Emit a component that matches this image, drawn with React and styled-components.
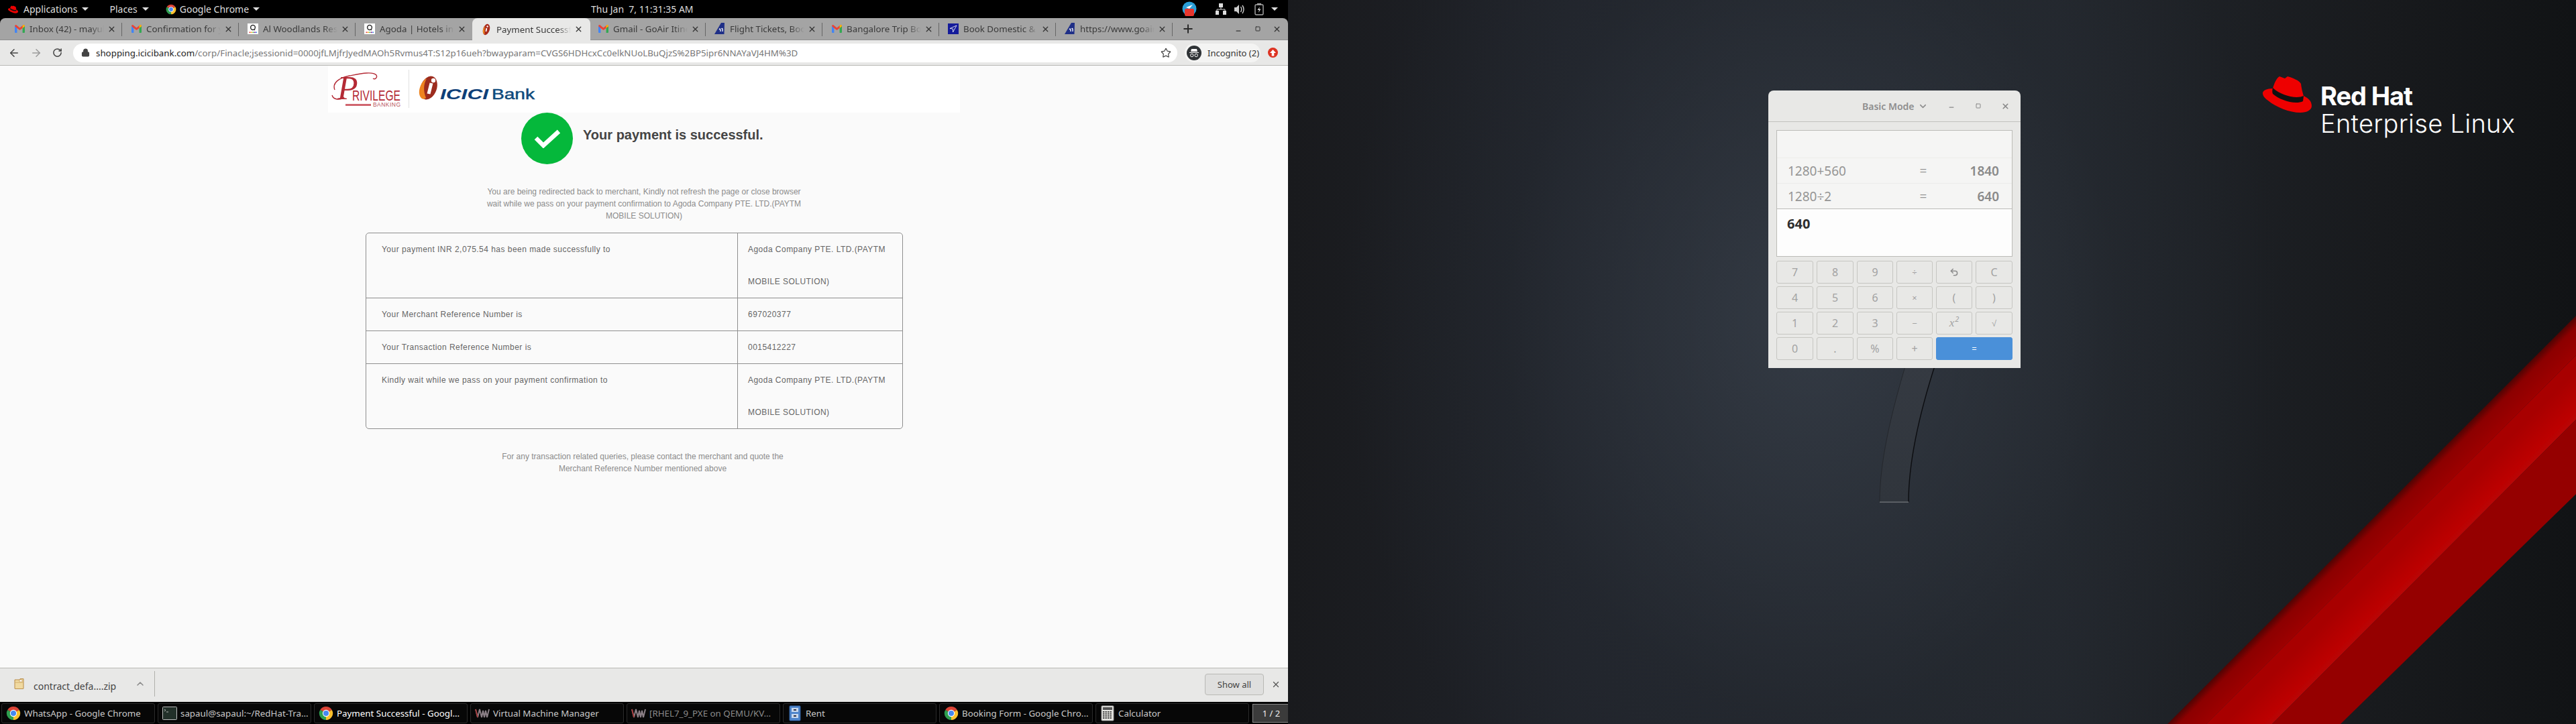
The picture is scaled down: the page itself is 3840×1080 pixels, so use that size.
import React from 'react';
import styled, { createGlobalStyle } from 'styled-components';
import { Undo2, ChevronDown, Star, Lock, ArrowLeft, ArrowRight, RotateCw, Plus, X, Minus, Square, ChevronUp } from 'lucide-react';

const Global = createGlobalStyle`
  html, body { margin: 0; padding: 0; background: #000; }
  * { box-sizing: border-box; }
  body { font-family: "Noto Sans", sans-serif; }
`;

const Root = styled.div`display: flex; width: 3840px; height: 1080px; overflow: hidden;`;
const Screen = styled.div`width: 1920px; height: 1080px; display: flex; flex-direction: column; flex: none;`;

/* top panel */
const TopBar = styled.div`height: 27px; background: #000; color: #dedede; font-size: 14px; display: flex; align-items: center; flex: none; position: relative;`;
const Menu = styled.div`display: flex; align-items: center; margin-left: ${p => p.$ml}px; gap: ${p => p.$gap || 0}px; white-space: nowrap;`;
const Caret = styled.span`width: 0; height: 0; margin-left: ${p => p.$ml ?? 7}px; border-left: 5px solid transparent; border-right: 5px solid transparent; border-top: 5px solid #dedede;`;
const Clock = styled.div`position: absolute; left: 881px; top: 0; line-height: 27px; white-space: pre;`;
const Tray = styled.div`margin-left: auto; display: flex; align-items: center; padding-right: 15px;`;
const TrayIcon = styled.svg`display: block; margin-left: ${p => p.$ml || 0}px;`;

/* tabs */
const TabStrip = styled.div`height: 33px; flex: none; background: #a4a4a4; display: flex; padding-left: 8px; border-top-left-radius: 8px; border-top-right-radius: 8px; border-bottom: 1px solid #8f8f8f; position: relative; align-items: stretch;`;
const TabItem = styled.div`
  width: ${p => (p.$active ? 176 : 174)}px; margin-right: ${p => (p.$active ? -2 : 0)}px; flex: none; position: relative; display: flex; align-items: center;
  padding-left: 13px; font-size: 13.33px; color: #3a3a3a; background: ${p => (p.$active ? '#e8e8e7' : 'transparent')};
  border-radius: 8px 8px 0 0; height: ${p => (p.$active ? 33 : 32)}px;
  z-index: ${p => (p.$active ? 1 : 0)};
  &::after { content: ''; display: ${p => (p.$sep ? 'block' : 'none')}; position: absolute; right: 0; top: 7px; width: 1px; height: 20px; background: #666; }
`;
const TabFav = styled.span`width: 16px; height: 18px; display: flex; align-items: center; justify-content: center; flex: none;`;
const TabTitle = styled.span`width: 111px; margin-left: 7px; white-space: nowrap; overflow: hidden; flex: none; -webkit-mask-image: linear-gradient(90deg, #000 82%, transparent); mask-image: linear-gradient(90deg, #000 82%, transparent);`;
const TabClose = styled.span`margin-left: 5px; display: flex; color: #333;`;
const NewTab = styled.div`margin-left: 13px; display: flex; align-items: center; color: #2a2a2a;`;
const WinCtrls = styled.div`margin-left: auto; display: flex; align-items: center; color: #333; font-size: 12px; gap: 0; padding-right: 2px;`;
const WinCtrl = styled.span`width: 29px; display: flex; justify-content: center; align-items: center;`;

/* toolbar */
const Toolbar = styled.div`height: 38px; flex: none; background: #e8e8e7; border-bottom: 1px solid #b9b9b5; display: flex; align-items: center; padding-left: 12px;`;
const NavBtn = styled.span`width: ${p => p.$w || 33}px; display: flex; color: ${p => (p.$off ? '#9a9a9a' : '#444')}; flex: none;`;
const Address = styled.div`margin-left: 0; width: 1646px; height: 28px; background: #fff; border-radius: 14px; display: flex; align-items: center; padding-left: 12px; font-size: 13.33px; white-space: nowrap; overflow: hidden; color: #777; flex: none;`;
const Host = styled.span`color: #222;`;
const Url = styled.span`margin-left: 9px; flex: 1; white-space: nowrap;`;
const StarWrap = styled.span`display: flex; padding-right: 9px; color: #444;`;
const Pill = styled.div`margin-left: 11px; width: 113px; height: 28px; background: #f4f4f3; border-radius: 14px; display: flex; align-items: center; padding-left: 2px; font-size: 13px; color: #333; white-space: nowrap; flex: none;`;
const Avatar = styled.span`width: 22px; height: 22px; border-radius: 50%; background: #2f3336; display: flex; align-items: center; justify-content: center; margin: 0 9px 0 1px; flex: none;`;
const Upgrade = styled.span`margin-left: 11px; width: 15px; height: 15px; border-radius: 50%; background: #dd3322; display: flex; align-items: center; justify-content: center; flex: none;`;

/* page */
const Page = styled.div`flex: 1; background: #fafafa; font-family: "Liberation Sans", Arial, sans-serif; display: flex; flex-direction: column; min-height: 0;`;
const LogoBar = styled.div`margin-left: 489px; width: 942px; height: 70px; background: #fff; flex: none;`;
const Hero = styled.div`margin-left: 777px; height: 77px; display: flex; flex: none;`;
const CheckCircle = styled.span`width: 77px; height: 77px; border-radius: 50%; background: #05b83b; display: flex; align-items: center; justify-content: center; flex: none;`;
const HeroTitle = styled.h1`margin: 22px 0 0 15px; font-size: 20px; line-height: 22px; font-weight: 700; color: #444; white-space: nowrap;`;
const Note = styled.p`margin: ${p => p.$mt}px 0 0 ${p => p.$ml}px; width: ${p => p.$w}px; text-align: center; font-size: 12px; line-height: 18px; color: #8c8c8c; flex: none;`;
const InfoTable = styled.div`margin: 16px 0 0 545px; width: 801px; border: 1px solid #8e8e8e; border-radius: 5px; font-size: 12px; line-height: 48px; color: #666; letter-spacing: 0.47px; flex: none;`;
const InfoRow = styled.div`display: flex; border-top: ${p => (p.$first ? 0 : 1)}px solid #8e8e8e;`;
const InfoLabel = styled.div`width: 554px; padding-left: 23px; border-right: 1px solid #8e8e8e; flex: none;`;
const InfoValue = styled.div`flex: 1; padding: 0 15px;`;

const DownloadBar = styled.div`height: 51px; flex: none; background: #e8e8e7; border-top: 1px solid #b9b9b5; display: flex; align-items: center; font-size: 14px; color: #444; position: relative;`;
const FileItem = styled.div`width: 231px; height: 38px; display: flex; align-items: center; padding-left: 21px; border-right: 1px solid #b0b0ac; flex: none; margin-top: -5px;`;
const FileName = styled.span`margin-left: 14px; white-space: nowrap; margin-top: 8px;`;
const FileChevron = styled.span`margin-left: 28px; display: flex; color: #888;`;
const ShowAll = styled.div`margin-left: auto; width: 88px; height: 32px; border: 1px solid #b9b9b5; border-radius: 4px; background: #dfdfde; display: flex; align-items: center; justify-content: center; font-size: 13px; color: #444; margin-top: -3px;`;
const BarClose = styled.span`margin: -3px 11px 0 11px; display: flex; color: #555;`;

const TaskBar = styled.div`height: 33px; flex: none; background: #000; display: flex; align-items: center; padding: 0 3px 0 2px; gap: 4px;`;
const TaskItem = styled.div`
  width: 229px; height: 30px; flex: none; display: flex; align-items: center; padding-left: 6px; border-radius: 3px;
  background: #070707; border: 1px solid #2b2b2b; font-size: 13.33px; white-space: nowrap; overflow: hidden; margin-top: 1px;
  color: ${p => (p.$active ? '#fff' : p.$dim ? '#8a8a8a' : '#c9c9c9')};
`;
const TaskIcon = styled.span`width: 22px; height: 22px; display: flex; align-items: center; justify-content: center; flex: none; margin-right: 5px;`;
const Pager = styled.div`width: 56px; height: 28px; margin-left: 1px; flex: none; background: #3b3b3b; border: 1px solid #8a8a8a; color: #eee; font-size: 13px; display: flex; align-items: center; justify-content: center;`;

/* desktop */
const Desktop = styled.div`
  width: 1920px; height: 1080px; flex: none; position: relative; overflow: hidden;
  background:
    radial-gradient(ellipse 700px 900px at 780px 480px, rgba(58,66,77,.75), rgba(40,46,54,.35) 65%, rgba(0,0,0,0) 100%),
    linear-gradient(90deg, #191a1d 0, #20232a 22%, #22262c 60%, #181a1d 85%, #111315 100%);
`;
const Wallpaper = styled.svg`position: absolute; inset: 0; display: block;`;
const Brand = styled.div`position: absolute; left: 1453px; top: 113px; display: flex; color: #fff;`;
const BrandText = styled.div`margin-left: 13px; display: flex; flex-direction: column; font-family: "Inter", "Open Sans", sans-serif; white-space: nowrap;`;
const BrandTop = styled.span`font-size: 38px; line-height: 41px; margin-top: 10px; font-weight: 700; letter-spacing: -1.1px;`;
const BrandBottom = styled.span`font-size: 38px; line-height: 41px; font-weight: 300; letter-spacing: 0.3px;`;

const CalcWindow = styled.div`position: absolute; left: 716px; top: 135px; width: 376px; height: 414px; background: #e8e8e6; border-radius: 8px 8px 0 0; display: flex; flex-direction: column; color: #8c8c8c; font-family: "Noto Sans", sans-serif;`;
const CalcHeader = styled.div`height: 47px; flex: none; border-bottom: 1px solid #c2c2be; display: flex; align-items: center; position: relative; padding-left: 140px; font-size: 14px; font-weight: 600; color: #8e8e8e;`;
const CalcTitle = styled.span`white-space: nowrap;`;
const CalcChevron = styled.span`margin-left: 5px; display: flex;`;
const CalcControls = styled.div`margin-left: auto; display: flex; padding-right: 3px;`;
const CalcCtrl = styled.span`width: 40px; display: flex; justify-content: center; align-items: center; color: #888;`;
const CalcDisplay = styled.div`margin: 12px 12px 0; height: 189px; border: 1px solid #bcbcb8; display: flex; flex-direction: column; flex: none;`;
const CalcSpacer = styled.div`height: 41px; background: #f5f5f4; border-bottom: 1px solid #ececea; flex: none;`;
const CalcRow = styled.div`height: 38px; background: #f5f5f4; border-bottom: 1px solid ${p => (p.$last ? '#bcbcb8' : '#ececea')}; display: flex; align-items: center; font-size: 19px; padding: 0 19px 0 16px; flex: none; color: #959595;`;
const CalcExpr = styled.span`width: 192px;`;
const CalcEq = styled.span`width: 20px; text-align: center;`;
const CalcResult = styled.span`flex: 1; text-align: right; font-weight: 600; color: #8a8a8a;`;
const CalcInput = styled.div`flex: 1; background: #fdfdfd; padding: 8px 15px; font-size: 20px; line-height: 28px; font-weight: 700; color: #2e2e2e;`;
const KeyGrid = styled.div`margin: 6px 12px 0; display: grid; grid-template-columns: 55px 55px 54px 54px 54px 55px; grid-auto-rows: 34px; gap: 4px 5px;`;
const Key = styled.div`
  border: 1px solid ${p => (p.$blue ? '#4a90d9' : '#c6c6c2')}; border-radius: 3px; background: ${p => (p.$blue ? '#4a90d9' : '#e8e8e6')};
  color: ${p => (p.$blue ? '#fff' : '#a2a2a2')}; font-size: ${p => p.$size || 16}px; display: flex; align-items: center; justify-content: center;
  grid-column: span ${p => p.$span || 1};
`;
const Italic = styled.span`font-style: italic; font-family: "Liberation Serif", serif; font-size: 17px;`;
const Sup = styled.sup`font-size: 11px; line-height: 0; margin-left: 1px; font-family: "Noto Sans", sans-serif;`;

/* drawings */
const Chrome = ({ s = 22 }) => (
  <svg width={s} height={s} viewBox="0 0 24 24">
    <path d="M12 12 L2.47 6.5 A11 11 0 0 1 21.53 6.5 Z" fill="#db4437" />
    <path d="M12 12 L21.53 6.5 A11 11 0 0 1 12 23 Z" fill="#fbc02d" />
    <path d="M12 12 L12 23 A11 11 0 0 1 2.47 6.5 Z" fill="#2e9e4f" />
    <circle cx="12" cy="12" r="5.6" fill="#fff" /><circle cx="12" cy="12" r="4.4" fill="#4688f1" />
  </svg>
);
const Gmail = () => (
  <svg width="15" height="12" viewBox="0 0 15 12">
    <path d="M0 2 V11 Q0 12 1 12 H3.4 V4 Z" fill="#4285f4" />
    <path d="M15 2 V11 Q15 12 14 12 H11.6 V4 Z" fill="#34a853" />
    <path d="M0 2 Q0 0 2 0 L7.5 4.4 L13 0 Q15 0 15 2 L11.6 5 L7.5 8 L3.4 5 Z" fill="#ea4335" />
    <path d="M11.6 1.2 L13 0 Q15 0 15 2 L11.6 5 Z" fill="#fbbc04" />
  </svg>
);
const Agoda = () => (
  <svg width="16" height="16" viewBox="0 0 16 16">
    <rect width="16" height="16" fill="#fff" />
    <circle cx="8" cy="6" r="3.4" fill="none" stroke="#333" strokeWidth="1.5" />
    <path d="M10 9 L11 10" stroke="#333" strokeWidth="1.2" />
    <rect x="2.5" y="12.5" width="2" height="1.6" fill="#e53935" /><rect x="5" y="12.5" width="2" height="1.6" fill="#fbc02d" />
    <rect x="7.5" y="12.5" width="2" height="1.6" fill="#43a047" /><rect x="10" y="12.5" width="2" height="1.6" fill="#8e24aa" /><rect x="12.5" y="12.5" width="1.5" height="1.6" fill="#1e88e5" />
  </svg>
);
const IciciFav = () => (
  <svg width="14" height="18" viewBox="0 0 14 18">
    <ellipse cx="7" cy="9" rx="4.8" ry="8.4" transform="rotate(18 7 9)" fill="#a92a1c" />
    <path d="M2.4 14 C1 11 3 5 5.4 4.2 C3.8 7 4 12 4.6 16 C3.6 16 2.8 15 2.4 14Z" fill="#ee8a1d" />
    <path d="M7.4 7 L6.4 12" stroke="#fff" strokeWidth="1.8" /><circle cx="8.6" cy="4.5" r="1.2" fill="#fff" />
  </svg>
);
const GoAir = () => (
  <svg width="16" height="18" viewBox="0 0 16 18">
    <path d="M10 0 L15 0 L14.5 17 L0 17 Z" fill="#1f2f87" />
    <path d="M7 10 Q9 7 9 13 M10.5 9 Q12.5 7 12 13" stroke="#fff" strokeWidth="1.3" fill="none" />
  </svg>
);
const Indigo = () => (
  <svg width="16" height="16" viewBox="0 0 16 16">
    <rect width="16" height="16" fill="#141b9a" />
    <path d="M3 7.5 L13 3 L7.5 13 L7.5 8 Z" fill="none" stroke="#fff" strokeWidth=".8" />
  </svg>
);
const Hat = ({ w = 73, h = 55 }) => (
  <svg width={w} height={h} viewBox="0 0 73 55" style={{ flex: 'none', display: 'block' }}>
    <path d="M25 1 L33 4 L37 1 C44 3 55 7 57 12 C58 20 60 27 61 30 C67 33 73 37 73 45 C73 51 66 55 56 55 C40 55 20 47 8 37 C2 33 0 29 0 26 C0 22 6 19 15 19 C17 12 20 4 25 1 Z" fill="#ee0000" />
    <path d="M15 18 C14 22 14 25 15 27 C25 36 48 44 60 38 L61 30 C50 35 28 30 15 18 Z" fill="#111" />
  </svg>
);
const Terminal = () => (
  <svg width="22" height="20" viewBox="0 0 22 20">
    <rect x=".5" y=".5" width="21" height="19" rx="1" fill="#223029" stroke="#bcbcbc" />
    <path d="M3 4 L5 5.5 L3 7 M6 8 H9" stroke="#dcdcdc" strokeWidth=".8" fill="none" />
  </svg>
);
const Vmm = () => (
  <svg width="22" height="16" viewBox="0 0 22 16">
    <path d="M1 2 L4 14 L7 2 L10 14 L12 4 L14 14 L16 4 L18 14 L21 2" fill="none" stroke="#8b7f86" strokeWidth="2" />
    <path d="M1 2 L4 14" stroke="#a33" strokeWidth="1.5" />
  </svg>
);
const Cabinet = () => (
  <svg width="18" height="24" viewBox="0 0 18 24">
    <rect x="1" y="1" width="16" height="22" rx="1" fill="#4f86cc" stroke="#2e5c9a" />
    <rect x="4" y="4" width="10" height="6" fill="#c7d8ee" /><rect x="4" y="13" width="10" height="6" fill="#c7d8ee" />
    <rect x="7" y="6" width="4" height="2" fill="#334" /><rect x="7" y="15" width="4" height="2" fill="#334" />
  </svg>
);
const CalcIcon = () => (
  <svg width="20" height="24" viewBox="0 0 20 24">
    <rect x="1" y="1" width="18" height="22" rx="1" fill="#e6e6e2" stroke="#999" />
    <rect x="3" y="3" width="14" height="4" fill="#555" />
    {[9, 12, 15, 18].map(y => [3, 6.5, 10, 13.5].map(x => <rect key={x + '-' + y} x={x} y={y} width="2.4" height="2" fill="#444" />))}
  </svg>
);
const FileZip = () => (
  <svg width="15" height="16" viewBox="0 0 15 16">
    <path d="M1 2 H9 V0.6 H14 V15 Q14 15.6 13 15.6 H2 Q1 15.6 1 15 Z" fill="#f0d9a0" stroke="#b88a45" />
    <rect x="8" y="2" width="4" height="3" fill="#fff" stroke="#b88a45" strokeWidth=".6" />
    <path d="M1 6 H14" stroke="#d2ad6a" />
  </svg>
);
const IncognitoGlyph = () => (
  <svg width="16" height="14" viewBox="0 0 16 14">
    <path d="M4 1 H12 L13 5 H3 Z M1 6 H15 V7 H1 Z" fill="#fff" />
    <circle cx="4.8" cy="10.5" r="2.2" fill="none" stroke="#fff" /><circle cx="11.2" cy="10.5" r="2.2" fill="none" stroke="#fff" />
  </svg>
);

const PrintedLogo = () => (
  <svg width="340" height="70" viewBox="0 0 340 70" style={{ display: 'block' }}>
    <rect width="340" height="70" fill="#fff" />
    <text x="14" y="50" fontFamily="Liberation Serif" fontStyle="italic" fontSize="50" fill="#b42a35">P</text>
    <path d="M10 36 C6 26 16 18 32 15 C48 12 66 8 72 14 C74 18 70 21 67 19" fill="none" stroke="#b42a35" strokeWidth="1.4" />
    <path d="M6 44 C8 51 18 52 24 47" fill="none" stroke="#b42a35" strokeWidth="1.4" />
    <text x="36" y="52" fontFamily="Liberation Sans" fontSize="22" fill="#b42a35" textLength="72" lengthAdjust="spacingAndGlyphs">RIVILEGE</text>
    <rect x="26" y="57" width="38" height="3" fill="#d0666f" />
    <text x="67" y="60.5" fontFamily="Liberation Sans" fontSize="8.5" fill="#b9545b" textLength="41">BANKING</text>
    <rect x="120" y="6" width="1" height="57" fill="#e0e0e0" />
    <ellipse cx="150" cy="33" rx="12" ry="18" transform="rotate(20 150 33)" fill="#9c2c1e" />
    <path d="M138 47 C132 38 140 22 147 19 C142 28 142 38 146 48 C143 51 140 50 138 47Z" fill="#ee8420" />
    <path d="M154 26 L150 42" stroke="#fff" strokeWidth="5" /><circle cx="157" cy="22" r="3.2" fill="#fff" />
    <text x="167" y="50" fontFamily="Liberation Sans" fontWeight="700" fontStyle="italic" fontSize="22" fill="#0e3f78" textLength="72" lengthAdjust="spacingAndGlyphs">ICICI</text>
    <text x="244" y="50" fontFamily="Liberation Sans" fontWeight="400" fontSize="22.5" stroke="#0e4a7c" strokeWidth=".5" fill="#0e4a7c" textLength="64" lengthAdjust="spacingAndGlyphs">Bank</text>
  </svg>
);

const tabs = [
  ['Inbox (42) - mayukh', <Gmail />],
  ['Confirmation for you', <Gmail />],
  ['Al Woodlands Restau', <Agoda />],
  ['Agoda | Hotels in Ba', <Agoda />],
  ['Payment Successful', <IciciFav />],
  ['Gmail - GoAir Itinerary', <Gmail />],
  ['Flight Tickets, Book', <GoAir />],
  ['Bangalore Trip Booki', <Gmail />],
  ['Book Domestic & Inte', <Indigo />],
  ['https://www.goair.in', <GoAir />],
];

const taskItems = [
  ['WhatsApp - Google Chrome', <Chrome />],
  ['sapaul@sapaul:~/RedHat-Tra...', <Terminal />],
  ['Payment Successful - Googl...', <Chrome />, 'active'],
  ['Virtual Machine Manager', <Vmm />],
  ['[RHEL7_9_PXE on QEMU/KV...', <Vmm />, 'dim'],
  ['Rent', <Cabinet />],
  ['Booking Form - Google Chro...', <Chrome />],
  ['Calculator', <CalcIcon />],
];

const keys = [
  ['7'], ['8'], ['9'], ['÷', 13], [<Undo2 size={14} strokeWidth={2.6} color="#8d8d8d" />], ['C'],
  ['4'], ['5'], ['6'], ['×', 13], ['('], [')'],
  ['1'], ['2'], ['3'], ['−', 13], [<Italic>x<Sup>2</Sup></Italic>], ['√', 13],
  ['0'], ['.'], ['%'], ['+'],
];

export default function App() {
  return (
    <Root>
      <Global />
      <Screen>
        <TopBar>
          <Menu $ml={12} $gap={8}><Hat w={15} h={12} />Applications<Caret $ml={-1} /></Menu>
          <Menu $ml={31}>Places<Caret /></Menu>
          <Menu $ml={25} $gap={5}><Chrome s={16} />Google Chrome<Caret $ml={1} /></Menu>
          <Clock>Thu Jan  7, 11:31:35 AM</Clock>
          <Tray>
            <TrayIcon width="22" height="24" viewBox="0 0 22 24">
              <circle cx="11" cy="11" r="10.5" fill="#2a9fd8" />
              <path d="M6 9 L16 5 L11 11 Z" fill="#fff" />
              <rect x="4" y="11" width="14" height="11" rx="2" fill="#e8362e" />
            </TrayIcon>
            <TrayIcon $ml={28} width="16" height="17" viewBox="0 0 16 17">
              <rect x="5" y="0" width="6" height="6" fill="#ddd" /><path d="M8 6 V9 M2 9 H14 M2 9 V11 M14 9 V11" stroke="#ddd" />
              <rect x="0" y="11" width="5" height="6" fill="#ddd" /><rect x="11" y="11" width="5" height="6" fill="#ddd" />
            </TrayIcon>
            <TrayIcon $ml={12} width="16" height="16" viewBox="0 0 16 16">
              <path d="M0 5 H3 L7 1 V15 L3 11 H0 Z" fill="#ccc" /><path d="M9.5 4 Q12 8 9.5 12 M12 2 Q16 8 12 14" stroke="#ccc" strokeWidth="1.4" fill="none" />
            </TrayIcon>
            <TrayIcon $ml={14} width="14" height="18" viewBox="0 0 14 18">
              <rect x="1" y="2" width="12" height="15" rx="1.5" fill="none" stroke="#aaa" strokeWidth="1.4" /><rect x="4" y="0" width="6" height="2" fill="#aaa" />
              <path d="M8 5 L4.5 10 H7 L6 14 L9.5 8.5 H7 Z" fill="#ddd" />
            </TrayIcon>
            <Caret $ml={11} />
          </Tray>
        </TopBar>

        <TabStrip>
          {tabs.map(([title, icon], i) => (
            <TabItem key={i} $active={i === 4} $sep={i !== 3 && i !== 4}>
              <TabFav>{icon}</TabFav>
              <TabTitle>{title}</TabTitle>
              <TabClose><X size={13} strokeWidth={2.4} /></TabClose>
            </TabItem>
          ))}
          <NewTab><Plus size={20} strokeWidth={2.4} /></NewTab>
          <WinCtrls>
            <WinCtrl><Minus size={10} strokeWidth={3} style={{ marginTop: 6 }} /></WinCtrl>
            <WinCtrl><Square size={8} strokeWidth={3} /></WinCtrl>
            <WinCtrl><X size={13} strokeWidth={2.4} /></WinCtrl>
          </WinCtrls>
        </TabStrip>

        <Toolbar>
          <NavBtn><ArrowLeft size={18} strokeWidth={2} /></NavBtn>
          <NavBtn $off><ArrowRight size={18} strokeWidth={2} /></NavBtn>
          <NavBtn $w={31}><RotateCw size={15} strokeWidth={2.4} /></NavBtn>
          <Address>
            <Lock size={13} strokeWidth={2.6} color="#444" fill="#444" style={{ flex: 'none' }} />
            <Url><Host>shopping.icicibank.com</Host>/corp/Finacle;jsessionid=0000jfLMjfrJyedMAOh5Rvmus4T:S12p16ueh?bwayparam=CVGS6HDHcxCc0elkNUoLBuQjzS%2BP5ipr6NNAYaVJ4HM%3D</Url>
            <StarWrap><Star size={16} strokeWidth={1.8} /></StarWrap>
          </Address>
          <Pill><Avatar><IncognitoGlyph /></Avatar>Incognito (2)</Pill>
          <Upgrade>
            <svg width="9" height="10" viewBox="0 0 10 11"><path d="M5 0 L10 5.5 H7 V10.5 H3 V5.5 H0 Z" fill="#fff" /></svg>
          </Upgrade>
        </Toolbar>

        <Page>
          <LogoBar><PrintedLogo /></LogoBar>
          <Hero>
            <CheckCircle>
              <svg width="40" height="28" viewBox="0 0 40 28"><path d="M3 13 L14 24 L37 3" fill="none" stroke="#fff" strokeWidth="6.5" /></svg>
            </CheckCircle>
            <HeroTitle>Your payment is successful.</HeroTitle>
          </Hero>
          <Note $mt={32} $ml={720} $w={480}>
            You are being redirected back to merchant, Kindly not refresh the page or close browser wait while we pass on your payment confirmation to Agoda Company PTE. LTD.(PAYTM MOBILE SOLUTION)
          </Note>
          <InfoTable>
            <InfoRow $first>
              <InfoLabel>Your payment INR 2,075.54 has been made successfully to</InfoLabel>
              <InfoValue>Agoda Company PTE. LTD.(PAYTM MOBILE SOLUTION)</InfoValue>
            </InfoRow>
            <InfoRow>
              <InfoLabel>Your Merchant Reference Number is</InfoLabel>
              <InfoValue>697020377</InfoValue>
            </InfoRow>
            <InfoRow>
              <InfoLabel>Your Transaction Reference Number is</InfoLabel>
              <InfoValue>0015412227</InfoValue>
            </InfoRow>
            <InfoRow>
              <InfoLabel>Kindly wait while we pass on your payment confirmation to</InfoLabel>
              <InfoValue>Agoda Company PTE. LTD.(PAYTM MOBILE SOLUTION)</InfoValue>
            </InfoRow>
          </InfoTable>
          <Note $mt={32} $ml={738} $w={440}>
            For any transaction related queries, please contact the merchant and quote the Merchant Reference Number mentioned above
          </Note>
        </Page>

        <DownloadBar>
          <FileItem>
            <FileZip />
            <FileName>contract_defa....zip</FileName>
            <FileChevron><ChevronUp size={16} strokeWidth={2.2} /></FileChevron>
          </FileItem>
          <ShowAll>Show all</ShowAll>
          <BarClose><X size={14} strokeWidth={2.2} /></BarClose>
        </DownloadBar>

        <TaskBar>
          {taskItems.map(([label, icon, state], i) => (
            <TaskItem key={i} $active={state === 'active'} $dim={state === 'dim'}>
              <TaskIcon>{icon}</TaskIcon>{label}
            </TaskItem>
          ))}
          <Pager>1 / 2</Pager>
        </TaskBar>
      </Screen>

      <Desktop>
        <Wallpaper width="1920" height="1080" viewBox="0 0 1920 1080">
          <defs>
            <linearGradient id="bandA" gradientUnits="userSpaceOnUse" x1="1616" y1="770" x2="1660" y2="814">
              <stop offset="0" stopColor="#3d0504" /><stop offset=".25" stopColor="#8c0000" /><stop offset=".8" stopColor="#a00000" /><stop offset="1" stopColor="#5a0000" />
            </linearGradient>
            <linearGradient id="bandB" gradientUnits="userSpaceOnUse" x1="1660" y1="814" x2="1708" y2="862">
              <stop offset="0" stopColor="#a80000" /><stop offset=".6" stopColor="#bc0000" /><stop offset="1" stopColor="#b21010" />
            </linearGradient>
            <linearGradient id="stem" x1="0" y1="0" x2="0" y2="1">
              <stop offset="0" stopColor="#353a42" /><stop offset="1" stopColor="#30353c" />
            </linearGradient>
          </defs>
          <polygon points="1311,1080 1920,471 1920,530 1369,1080" fill="url(#bandA)" />
          <polygon points="1369,1080 1920,530 1920,626 1467,1080" fill="url(#bandB)" />
          <polygon points="1467,1080 1920,626 1920,737 1569,1080" fill="#950000" />
          <path d="M922 540 C898 620 882 690 882 749 L925 749 C925 690 940 620 966 540 Z" fill="url(#stem)" />
          <path d="M966 540 C940 620 925 690 925 749" fill="none" stroke="#0c0d10" strokeWidth="1.4" />
          <path d="M922 540 C898 620 882 690 882 749" fill="none" stroke="#24272c" strokeWidth="1" />
          <rect x="882" y="748" width="43" height="2" fill="#5a5e64" />
        </Wallpaper>
        <Brand>
          <Hat />
          <BrandText>
            <BrandTop>Red Hat</BrandTop>
            <BrandBottom>Enterprise Linux</BrandBottom>
          </BrandText>
        </Brand>
        <CalcWindow>
          <CalcHeader>
            <CalcTitle>Basic Mode</CalcTitle>
            <CalcChevron><ChevronDown size={15} strokeWidth={2.6} /></CalcChevron>
            <CalcControls>
              <CalcCtrl><Minus size={10} strokeWidth={3} style={{ marginTop: 4 }} /></CalcCtrl>
              <CalcCtrl><Square size={8} strokeWidth={3} /></CalcCtrl>
              <CalcCtrl><X size={13} strokeWidth={3} /></CalcCtrl>
            </CalcControls>
          </CalcHeader>
          <CalcDisplay>
            <CalcSpacer />
            <CalcRow><CalcExpr>1280+560</CalcExpr><CalcEq>=</CalcEq><CalcResult>1840</CalcResult></CalcRow>
            <CalcRow $last><CalcExpr>1280÷2</CalcExpr><CalcEq>=</CalcEq><CalcResult>640</CalcResult></CalcRow>
            <CalcInput>640</CalcInput>
          </CalcDisplay>
          <KeyGrid>
            {keys.map(([label, size], i) => <Key key={i} $size={size}>{label}</Key>)}
            <Key $blue $span={2} $size={13}>=</Key>
          </KeyGrid>
        </CalcWindow>
      </Desktop>
    </Root>
  );
}
